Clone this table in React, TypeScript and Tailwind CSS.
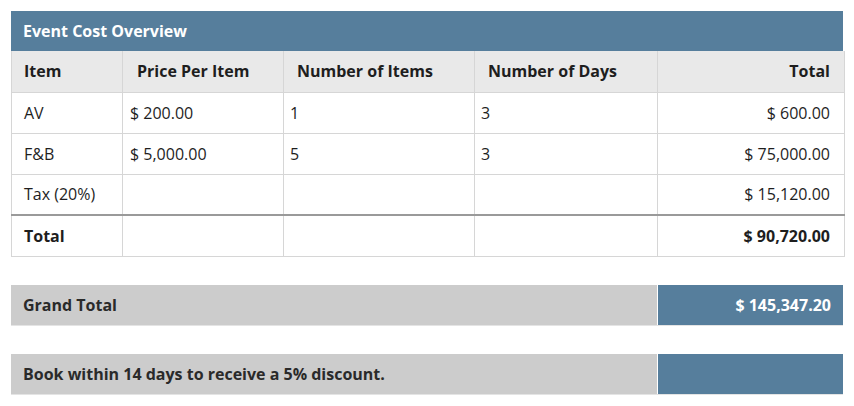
import React from "react";

const rows = [
  { item: "AV", price: "$ 200.00", num: "1", days: "3", total: "$ 600.00" },
  { item: "F&B", price: "$ 5,000.00", num: "5", days: "3", total: "$ 75,000.00" },
  { item: "Tax (20%)", price: "", num: "", days: "", total: "$ 15,120.00" },
];

export default function App() {
  const td = "border border-[#d6d6d6] h-[41px] align-middle leading-[20px]";
  const thick = "border-b-2 border-b-[#9a9a9a]";
  return (
    <div
      className="w-[854px] h-[406px] bg-white pt-[11px] px-[11px] text-[16px] text-[#1e1e1e]"
      style={{ fontFamily: '"Open Sans", "Liberation Sans", sans-serif' }}
    >
      <div className="w-[832px]">
        <div className="h-[40px] bg-[#567e9c] text-white font-bold flex items-center px-3">
          Event Cost Overview
        </div>
        <table className="w-[833px] border-collapse table-fixed">
          <colgroup>
            <col className="w-[111px]" />
            <col className="w-[161px]" />
            <col className="w-[191px]" />
            <col className="w-[183px]" />
            <col className="w-[187px]" />
          </colgroup>
          <thead>
            <tr className="bg-[#e9e9e9] font-bold">
              <td className={`${td} border-t-0 h-[40px] px-3`}>Item</td>
              <td className={`${td} border-t-0 h-[40px] pl-[14px]`}>Price Per Item</td>
              <td className={`${td} border-t-0 h-[40px] pl-[13px]`}>Number of Items</td>
              <td className={`${td} border-t-0 h-[40px] pl-[13px]`}>Number of Days</td>
              <td className={`${td} border-t-0 h-[40px] pr-[14px] text-right`}>Total</td>
            </tr>
          </thead>
          <tbody>
            {rows.map((r, i) => (
              <tr key={i}>
                <td className={`${td} px-3 ${i === 2 ? thick : ""}`}>{r.item}</td>
                <td className={`${td} pl-[7px] ${i === 2 ? thick : ""}`}>{r.price}</td>
                <td className={`${td} pl-[6px] ${i === 2 ? thick : ""}`}>{r.num}</td>
                <td className={`${td} pl-[6px] ${i === 2 ? thick : ""}`}>{r.days}</td>
                <td className={`${td} pr-[14px] text-right ${i === 2 ? thick : ""}`}>{r.total}</td>
              </tr>
            ))}
            <tr className="font-bold">
              <td className={`${td} px-3`}>Total</td>
              <td className={td}></td>
              <td className={td}></td>
              <td className={td}></td>
              <td className={`${td} pr-[14px] text-right`}>$ 90,720.00</td>
            </tr>
          </tbody>
        </table>

        <div className="mt-[28px] flex gap-[1px] font-bold border-b border-[#e4e4e4]">
          <div className="flex-1 h-[40px] bg-[#cccccc] flex items-center px-3 text-[#2a2a2a]">Grand Total</div>
          <div className="w-[185px] h-[40px] bg-[#567e9c] flex items-center justify-end px-3 text-white">
            $ 145,347.20
          </div>
        </div>

        <div className="mt-[28px] flex gap-[1px] font-bold border-b border-[#e4e4e4]">
          <div className="flex-1 h-[40px] bg-[#cccccc] flex items-center px-3 text-[#2a2a2a]">
            Book within 14 days to receive a 5% discount.
          </div>
          <div className="w-[185px] h-[40px] bg-[#567e9c]"></div>
        </div>
      </div>
    </div>
  );
}
